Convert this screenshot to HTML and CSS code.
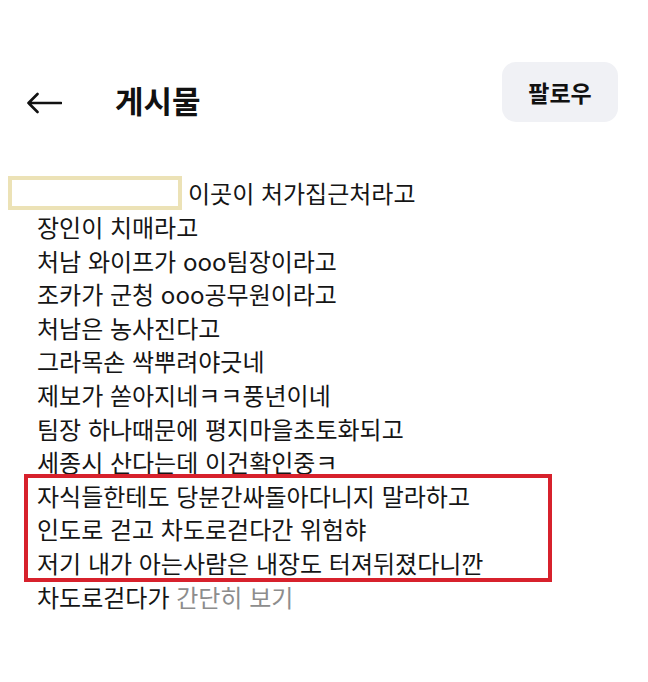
FILE: index.html
```html
<!DOCTYPE html>
<html lang="ko">
<head>
<meta charset="utf-8">
<link rel="stylesheet" href="styles.css">
</head>
<body>
<div class="page">
  <header class="topbar">
    <div class="left">
      <svg class="back" width="36" height="22" viewBox="0 0 36 22" aria-hidden="true">
        <path d="M2.5 11 H35 M11.5 2 L2.5 11 L11.5 20" fill="none" stroke="#111" stroke-width="2.6" stroke-linecap="round" stroke-linejoin="round"/>
      </svg>
      <h1 class="title">게시물</h1>
    </div>
    <button class="follow">팔로우</button>
  </header>
  <div class="post">
    <div class="line first"><span class="redact"></span><span>이곳이 처가집근처라고</span></div>
    <div class="line">장인이 치매라고</div>
    <div class="line">처남 와이프가 ooo팀장이라고</div>
    <div class="line">조카가 군청 ooo공무원이라고</div>
    <div class="line">처남은 농사진다고</div>
    <div class="line">그라목손 싹뿌려야긋네</div>
    <div class="line">제보가 쏟아지네ㅋㅋ풍년이네</div>
    <div class="line">팀장 하나때문에 평지마을초토화되고</div>
    <div class="line">세종시 산다는데 이건확인중ㅋ</div>
    <div class="mark">
      <div class="line">자식들한테도 당분간싸돌아다니지 말라하고</div>
      <div class="line">인도로 걷고 차도로걷다간 위험햐</div>
      <div class="line">저기 내가 아는사람은 내장도 터져뒤졌다니깐</div>
    </div>
    <div class="line">차도로걷다가 <span class="less">간단히 보기</span></div>
  </div>
</div>
</body>
</html>
```
FILE: styles.css
```css
html, body {
  margin: 0;
  padding: 0;
  background: #ffffff;
}
body {
  font-family: "Noto Sans CJK KR", "Noto Sans", sans-serif;
  color: #151515;
}
.page {
  width: 648px;
  height: 682px;
  overflow: hidden;
}
.topbar {
  display: flex;
  justify-content: space-between;
  align-items: flex-start;
  padding: 62px 30px 0 26px;
}
.left {
  display: flex;
  align-items: center;
  margin-top: 17px;
}
.back {
  display: block;
  margin-top: 6px;
}
.title {
  margin: 0 0 0 53px;
  font-size: 31px;
  font-weight: 700;
  line-height: 42px;
  color: #111;
}
.follow {
  width: 116px;
  height: 60px;
  border: none;
  border-radius: 14px;
  background: #f0f1f5;
  font-family: "Noto Sans CJK KR", "Noto Sans", sans-serif;
  font-size: 23px;
  font-weight: 700;
  color: #111;
  padding: 0;
}
.post {
  margin-top: 54px;
  padding-left: 37px;
  font-size: 24px;
  line-height: 33.6px;
}
.line {
  white-space: nowrap;
}
.first {
  display: flex;
  align-items: center;
  margin-left: -29px;
  gap: 6px;
}
.redact {
  display: block;
  width: 174px;
  height: 34px;
  box-sizing: border-box;
  border: 4px solid #ece2b6;
  background: #fff;
}
.mark {
  position: relative;
}
.mark::before {
  content: "";
  position: absolute;
  left: -13px;
  top: -5px;
  width: 528px;
  height: 108px;
  box-sizing: border-box;
  border: 4px solid #d7212c;
  pointer-events: none;
}
.less {
  color: #8d8d8d;
}
```
